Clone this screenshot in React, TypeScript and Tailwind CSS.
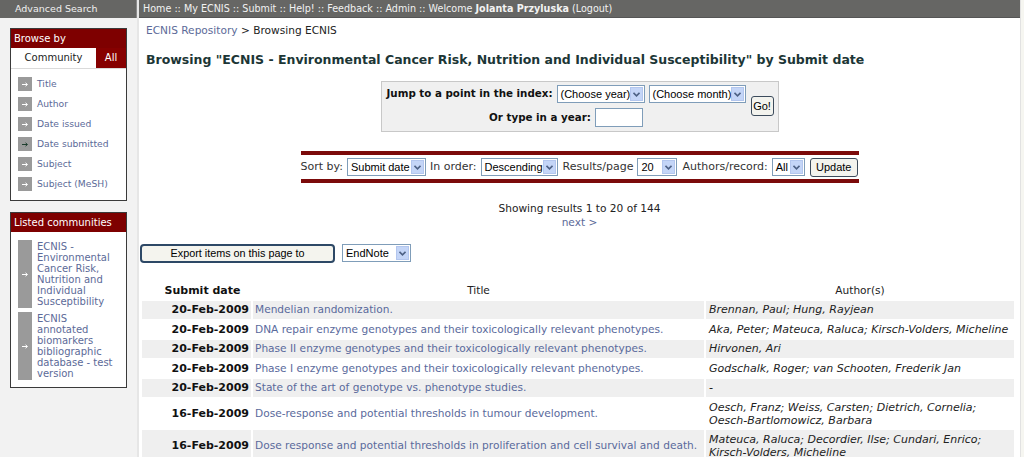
import React from "react";

const browseItems = [
  { label: "Title", active: false },
  { label: "Author", active: false },
  { label: "Date issued", active: false },
  { label: "Date submitted", active: true },
  { label: "Subject", active: false },
  { label: "Subject (MeSH)", active: false },
];

const communities = [
  "ECNIS - Environmental Cancer Risk, Nutrition and Individual Susceptibility",
  "ECNIS annotated biomarkers bibliographic database - test version",
];

const rows = [
  { date: "20-Feb-2009", title: "Mendelian randomization.", authors: ["Brennan, Paul; Hung, Rayjean"] },
  {
    date: "20-Feb-2009",
    title: "DNA repair enzyme genotypes and their toxicologically relevant phenotypes.",
    authors: ["Aka, Peter; Mateuca, Raluca; Kirsch-Volders, Micheline"],
  },
  {
    date: "20-Feb-2009",
    title: "Phase II enzyme genotypes and their toxicologically relevant phenotypes.",
    authors: ["Hirvonen, Ari"],
  },
  {
    date: "20-Feb-2009",
    title: "Phase I enzyme genotypes and their toxicologically relevant phenotypes.",
    authors: ["Godschalk, Roger; van Schooten, Frederik Jan"],
  },
  { date: "20-Feb-2009", title: "State of the art of genotype vs. phenotype studies.", authors: ["-"] },
  {
    date: "16-Feb-2009",
    title: "Dose-response and potential thresholds in tumour development.",
    authors: ["Oesch, Franz; Weiss, Carsten; Dietrich, Cornelia;", "Oesch-Bartlomowicz, Barbara"],
  },
  {
    date: "16-Feb-2009",
    title: "Dose response and potential thresholds in proliferation and cell survival and death.",
    authors: ["Mateuca, Raluca; Decordier, Ilse; Cundari, Enrico;", "Kirsch-Volders, Micheline"],
  },
];

const Arrow = ({ dark }: { dark?: boolean }) => (
  <svg width="7" height="5" viewBox="0 0 7 5">
    <path d="M0 2.5h5M3.5 0.8l2 1.7-2 1.7" stroke={dark ? "#1f3f2f" : "#ffffff"} strokeWidth="1" fill="none" />
  </svg>
);

const FakeSelect = ({ value, width }: { value: string; width: string }) => (
  <div
    className={`flex shrink-0 items-center justify-between h-[18px] border border-[#7f9db9] bg-white pl-[3px] pr-[1px] font-['Liberation_Sans'] text-[11px] text-black whitespace-nowrap ${width}`}
  >
    <span className="leading-none">{value}</span>
    <span className="flex items-center justify-center w-[13px] h-[14px] bg-[#c4d5f7] border border-[#b3c6ee]">
      <svg width="7" height="5" viewBox="0 0 7 5">
        <path d="M0.5 0.8l3 3 3-3" stroke="#4d6185" strokeWidth="1.6" fill="none" />
      </svg>
    </span>
  </div>
);

const SmallButton = ({ label, className }: { label: string; className?: string }) => (
  <div
    className={`flex shrink-0 items-center justify-center h-[19px] border border-[#3c4b5c] rounded-[3px] bg-[#f3f3ee] font-['Liberation_Sans'] text-[11px] text-black ${className ?? ""}`}
  >
    {label}
  </div>
);

const BrowseBox = () => (
  <div className="mx-[10px] mt-[10px] border border-[#3a3a3a] bg-white">
    <div className="h-[19px] bg-[#7e0000] text-white text-[10px] pl-[3px] leading-[19px]">Browse by</div>
    <div className="flex h-[20px] text-[10px] leading-[20px]">
      <div className="flex-1 text-center text-[#222]">Community</div>
      <div className="w-[30px] bg-[#860000] text-white text-center">All</div>
    </div>
    <ul className="pt-[5px] pb-[6px] pl-[7px] border-t border-[#dadada]">
      {browseItems.map((item) => (
        <li key={item.label} className="flex items-center h-[20px]">
          <span className="flex items-center justify-center w-[14px] h-[14px] bg-[#9a9a9a]">
            <Arrow dark={item.active} />
          </span>
          <span className="ml-[5px] text-[9.2px] text-[#5c6a98] whitespace-nowrap">{item.label}</span>
        </li>
      ))}
    </ul>
  </div>
);

const CommunitiesBox = () => (
  <div className="mx-[10px] mt-[11px] border border-[#3a3a3a] bg-white">
    <div className="h-[19px] bg-[#7e0000] text-white text-[10px] pl-[3px] leading-[19px]">Listed communities</div>
    <ul className="pt-[8px] pb-[7px] pl-[7px] flex flex-col gap-[4px]">
      {communities.map((c) => (
        <li key={c} className="flex">
          <span className="flex items-center justify-center w-[14px] shrink-0 bg-[#9a9a9a]">
            <Arrow />
          </span>
          <span className="ml-[5px] w-[76px] text-[10px] leading-[11px] text-[#5c6a98] py-[1px]">{c}</span>
        </li>
      ))}
    </ul>
  </div>
);

export default function App() {
  return (
    <div className="flex w-[1024px] h-[457px] overflow-hidden bg-white font-['DejaVu_Sans',sans-serif]">
      <aside className="w-[139px] shrink-0 bg-[#f2f2f2] border-r-2 border-[#e6e6e6]">
        <div className="h-[18px] bg-[#666664] text-[#f0f0f0] text-[9.5px] leading-[18px] pl-[15px] border-r border-[#8a8a8a]">
          Advanced Search
        </div>
        <BrowseBox />
        <CommunitiesBox />
      </aside>

      <main className="flex-1 min-w-0">
        <div className="h-[18px] bg-[#666664] text-[#f2f2f2] text-[9.6px] leading-[18px] pl-[4px] border-b border-[#555] whitespace-nowrap">
          Home :: My ECNIS :: Submit :: Help! :: Feedback :: Admin :: Welcome{" "}
          <b className="font-bold">Jolanta Przyluska</b> (Logout)
        </div>

        <div className="pl-[7px] pt-[5px] text-[10.6px] text-[#222]">
          <span className="text-[#5c6a98]">ECNIS Repository</span> &gt; Browsing ECNIS
        </div>

        <h1 className="pl-[7px] mt-[12px] text-[12.5px] font-bold text-[#1c3636] whitespace-nowrap">
          Browsing "ECNIS - Environmental Cancer Risk, Nutrition and Individual Susceptibility" by Submit date
        </h1>

        <div className="flex justify-center mt-[11px]">
          <div className="flex items-center gap-[5px] w-[398px] h-[51px] border border-[#c8c8c8] bg-[#f0f0f0] pl-[5px] pr-[5px] whitespace-nowrap">
            <div className="flex flex-col items-center gap-[5px]">
              <div className="flex items-center gap-[4px]">
                <span className="text-[10.3px] font-bold text-[#111]">Jump to a point in the index:</span>
                <FakeSelect value="(Choose year)" width="w-[88px]" />
                <FakeSelect value="(Choose month)" width="w-[97px]" />
              </div>
              <div className="flex items-center gap-[4px]">
                <span className="text-[10.3px] font-bold text-[#111]">Or type in a year:</span>
                <div className="w-[48px] h-[19px] border border-[#7f9db9] bg-white" />
              </div>
            </div>
            <SmallButton label="Go!" className="w-[23px] h-[20px]" />
          </div>
        </div>

        <div className="flex justify-center mt-[19px]">
          <div className="w-[558px] border-t-[4px] border-b-[4px] border-[#7b0a0a] flex items-center gap-[4px] h-[32px] pt-[1px] text-[11px] text-[#333] whitespace-nowrap">
            <span>Sort by:</span>
            <FakeSelect value="Submit date" width="w-[79px]" />
            <span>In order:</span>
            <FakeSelect value="Descending" width="w-[77px]" />
            <span className="ml-[1px]">Results/page</span>
            <FakeSelect value="20" width="w-[40px]" />
            <span className="ml-[1px]">Authors/record:</span>
            <FakeSelect value="All" width="w-[33px]" />
            <SmallButton label="Update" className="w-[48px] ml-[1px]" />
          </div>
        </div>

        <div className="mt-[19px] text-center text-[10.6px] leading-[13px] text-[#222]">
          <div>Showing results 1 to 20 of 144</div>
          <div className="text-[#5c6a98] mt-[1px]">next &gt;</div>
        </div>

        <div className="flex items-center gap-[7px] mt-[15px] pl-[1px]">
          <div className="w-[195px] h-[19px] flex items-center justify-center rounded-[4px] border-2 border-[#2d4866] bg-[#f4f4ee] font-['Liberation_Sans'] text-[10.8px] text-black">
            Export items on this page to
          </div>
          <FakeSelect value="EndNote" width="w-[69px]" />
        </div>

        <table className="mt-[19px] ml-[1px] w-[876px] border-separate border-spacing-x-[2px] border-spacing-y-[1px] text-[10.6px]">
          <thead>
            <tr className="h-[17px]">
              <th className="w-[109px] text-center font-bold text-[11px] text-[#111] pl-[12px]">Submit date</th>
              <th className="font-normal text-center text-[#222]">Title</th>
              <th className="w-[308px] font-normal text-center text-[#222]">Author(s)</th>
            </tr>
          </thead>
          <tbody>
            {rows.map((r, i) => {
              const bg = i % 2 === 0 ? "bg-[#efefef]" : "bg-white";
              const tall = r.authors.length > 1;
              return (
                <tr key={i} className={tall ? "h-[31px]" : "h-[18.5px]"}>
                  <td className={`${bg} text-right font-bold text-[11px] text-[#111] pr-[2px] leading-[13px]`}>{r.date}</td>
                  <td className={`${bg} text-[#5a6a9c] pl-[2px] whitespace-nowrap leading-[13px]`}>{r.title}</td>
                  <td className={`${bg} italic text-[11px] text-[#222] pl-[3px] leading-[13px]`}>
                    {r.authors.map((a) => (
                      <div key={a}>{a}</div>
                    ))}
                  </td>
                </tr>
              );
            })}
          </tbody>
        </table>
      </main>
      <div className="w-[4px] shrink-0 bg-[#f6f6f1] border-l border-[#e2e2e2]" />
    </div>
  );
}
